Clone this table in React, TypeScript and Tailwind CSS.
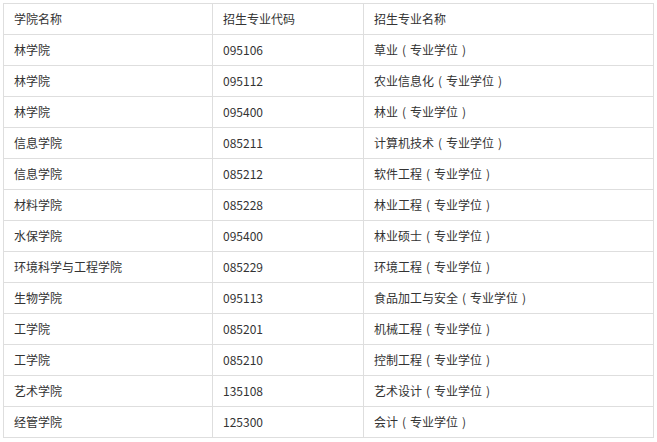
import React from "react";

const rows: [string, string, string][] = [
  ["学院名称", "招生专业代码", "招生专业名称"],
  ["林学院", "095106", "草业（专业学位）"],
  ["林学院", "095112", "农业信息化（专业学位）"],
  ["林学院", "095400", "林业（专业学位）"],
  ["信息学院", "085211", "计算机技术（专业学位）"],
  ["信息学院", "085212", "软件工程（专业学位）"],
  ["材料学院", "085228", "林业工程（专业学位）"],
  ["水保学院", "095400", "林业硕士（专业学位）"],
  ["环境科学与工程学院", "085229", "环境工程（专业学位）"],
  ["生物学院", "095113", "食品加工与安全（专业学位）"],
  ["工学院", "085201", "机械工程（专业学位）"],
  ["工学院", "085210", "控制工程（专业学位）"],
  ["艺术学院", "135108", "艺术设计（专业学位）"],
  ["经管学院", "125300", "会计（专业学位）"],
];

function Cell({ text }: { text: string }) {
  const parts = text.split(/([（）])/);
  return (
    <>
      {parts.map((p, i) =>
        p === "（" || p === "）" ? (
          <span key={i} className="inline-block w-[12px] text-center">
            {p === "（" ? "(" : ")"}
          </span>
        ) : (
          <React.Fragment key={i}>{p}</React.Fragment>
        )
      )}
    </>
  );
}

export default function App() {
  return (
    <div className="w-[657px] h-[442px] bg-white pl-[3px] pt-[3px]">
      <table
        className="border-collapse text-[12px] text-[#333]"
        style={{ fontFamily: '"Noto Sans CJK SC", "Noto Sans", sans-serif' }}
      >
        <colgroup>
          <col className="w-[209px]" />
          <col className="w-[151px]" />
          <col className="w-[290px]" />
        </colgroup>
        <tbody>
          {rows.map((r, i) => (
            <tr key={i} className="h-[31px]">
              {r.map((c, j) => (
                <td
                  key={j}
                  className="border border-[#dedede] px-[10px] py-0 leading-[30px] align-middle whitespace-nowrap"
                >
                  <Cell text={c} />
                </td>
              ))}
            </tr>
          ))}
        </tbody>
      </table>
    </div>
  );
}
